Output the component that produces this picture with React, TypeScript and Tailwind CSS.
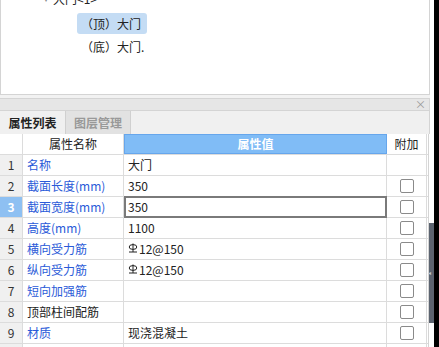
import React from "react";

const font = { fontFamily: '"Noto Sans CJK SC", "Noto Sans", sans-serif' };

type Row = { name: string; value?: string; rebar?: boolean; black?: boolean; check?: boolean };

const rows: Row[] = [
  { name: "名称", value: "大门", check: false },
  { name: "截面长度(mm)", value: "350", check: true },
  { name: "截面宽度(mm)", value: "350", check: true },
  { name: "高度(mm)", value: "1100", check: true },
  { name: "横向受力筋", value: "12@150", rebar: true, check: true },
  { name: "纵向受力筋", value: "12@150", rebar: true, check: true },
  { name: "短向加强筋", check: true },
  { name: "顶部柱间配筋", black: true, check: true },
  { name: "材质", value: "现浇混凝土", check: true },
  { name: "", check: true },
];

function Rebar() {
  return (
    <svg width="10" height="10" viewBox="0 0 10 10" className="mr-[1px] -mt-[3px] shrink-0">
      <ellipse cx="5" cy="4" rx="3.8" ry="2.4" fill="none" stroke="#222" strokeWidth="1" />
      <line x1="5" y1="0.5" x2="5" y2="9" stroke="#222" strokeWidth="1" />
      <line x1="1" y1="9" x2="9" y2="9" stroke="#222" strokeWidth="1" />
    </svg>
  );
}

export default function App() {
  return (
    <div className="w-[439px] h-[347px] bg-black flex overflow-hidden text-[12px]" style={font}>
      <div className="w-[434px] h-full bg-white flex flex-col">
        {/* tree panel */}
        <div className="w-[430px] h-[95px] shrink-0 border-l border-r border-b border-[#d4d4d4] relative overflow-hidden">
          <div className="flex items-center h-[18px] -mt-[10px] pl-[43px] text-[#222]">
            <span className="text-[8px] text-[#888] mr-[5px]">▾</span>
            <span>大门&lt;1&gt;</span>
          </div>
          <div className="ml-[76px] mt-[5px] w-[70px] h-[21px] bg-[#c4dcf4] rounded-[3px] flex items-center pl-[4px] text-[#222]">
            （顶）大门
          </div>
          <div className="ml-[80px] mt-[4px] h-[18px] flex items-center text-[#222]">（底）大门.</div>
        </div>
        <div className="h-[4px] bg-[#f2f2f2] shrink-0 border-b border-[#d4d4d4] w-[430px]" />
        {/* title bar */}
        <div className="h-[12px] w-[430px] bg-[#e6e6e6] border-b border-r border-[#d4d4d4] flex items-center justify-end pr-[3px] shrink-0">
          <span className="text-[#999] text-[11px] leading-none">×</span>
        </div>
        {/* tabs */}
        <div className="h-[23px] w-[430px] bg-[#f0f0f0] border-r border-[#d4d4d4] flex shrink-0">
          <div className="w-[66px] h-full border-r border-[#d0d0d0] flex items-center justify-center font-bold text-[#222]">
            属性列表
          </div>
          <div className="w-[65px] h-full border-r border-[#d0d0d0] bg-[#e2e2e2] flex items-center justify-center font-bold text-[#999]">
            图层管理
          </div>
        </div>
        {/* table */}
        <div className="flex flex-1 min-h-0">
          <div className="w-[429px] border-r border-[#d4d4d4] overflow-hidden">
            <div className="flex h-[21px] border-b border-[#dcdcdc]">
              <div className="w-[23px] border-r border-[#dcdcdc] shrink-0" />
              <div className="w-[101px] border-r border-[#dcdcdc] flex items-center justify-center text-[#222] shrink-0">属性名称</div>
              <div className="w-[263px] bg-[#80bcf6] border border-[#66a6ec] flex items-center justify-center text-white font-bold shrink-0">属性值</div>
              <div className="w-[40px] border-r border-[#dcdcdc] flex items-center justify-center text-[#222] shrink-0">附加</div>
            </div>
            {rows.map((r, i) => {
              const sel = i === 2;
              return (
                <div key={i} className="flex h-[21px] border-b border-[#dcdcdc]">
                  <div
                    className={
                      sel
                        ? "w-[23px] bg-[#8ec0f2] text-white border-r border-[#dcdcdc] flex items-center justify-center font-bold shrink-0"
                        : "w-[23px] bg-[#f0f0f0] text-[#333] border-r border-[#dcdcdc] flex items-center justify-center shrink-0"
                    }
                  >
                    {r.name ? i + 1 : ""}
                  </div>
                  <div
                    className={
                      r.black
                        ? "w-[101px] border-r border-[#dcdcdc] flex items-center pl-[4px] text-[#222] whitespace-nowrap shrink-0"
                        : "w-[101px] border-r border-[#dcdcdc] flex items-center pl-[4px] text-[#2a5ad8] whitespace-nowrap shrink-0"
                    }
                  >
                    {r.name}
                  </div>
                  <div
                    className={
                      sel
                        ? "w-[263px] border-2 border-[#7a7a7a] -mt-[1px] h-[22px] flex items-center pl-[2px] text-[#222] shrink-0"
                        : "w-[263px] border-r border-[#dcdcdc] flex items-center pl-[4px] text-[#222] shrink-0"
                    }
                  >
                    {r.rebar && <Rebar />}
                    {r.value}
                  </div>
                  <div className="w-[40px] border-r border-[#dcdcdc] flex items-center justify-center shrink-0">
                    {r.check && <div className="w-[14px] h-[14px] border border-[#8a8a8a] rounded-[2px] bg-white" />}
                  </div>
                </div>
              );
            })}
          </div>
          <div className="w-[5px] relative">
            <div className="mt-[89px] h-[100px] bg-[#5c6470] flex items-center">
              <span className="text-[6px] text-[#c0c4cc] leading-none -ml-[1px]">◂</span>
            </div>
          </div>
        </div>
      </div>
    </div>
  );
}
